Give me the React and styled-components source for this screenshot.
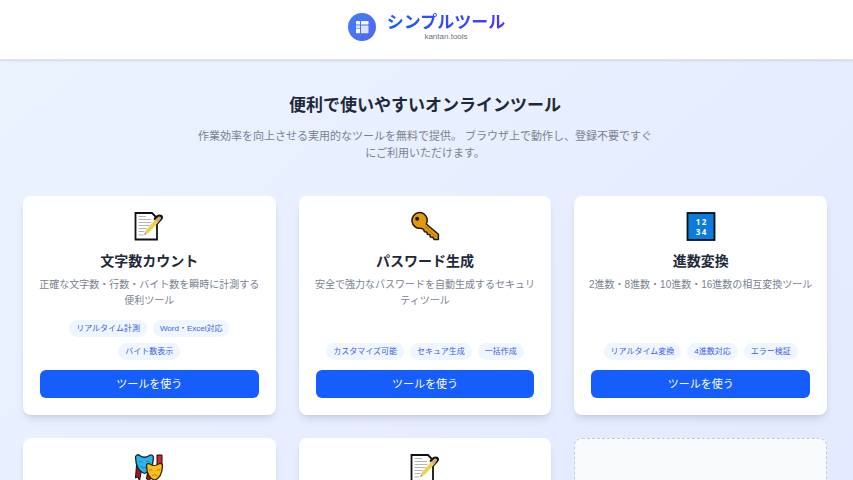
import React from "react";
import styled, { createGlobalStyle } from "styled-components";

const GlobalStyle = createGlobalStyle`
  * {
    box-sizing: border-box;
  }

  body {
    margin: 0;
    color: #1e2939;
    font-family: "Liberation Sans", "Noto Sans CJK JP", sans-serif;
  }

  h1, h2, h3, p, ul {
    margin: 0;
    padding: 0;
  }
`;

const MemoIcon = () => (
  <svg viewBox="0 0 30 30" aria-hidden="true">
    <path d="M1.500 2h16.500l5 5v21.500h-21.500z" fill="#fff" stroke="#111" strokeWidth="1.800" />
    <path
      d="M4.500 5.500h7.500M4.500 8.500h12.500M4.500 11.500h13M4.500 14.500h11M4.500 17.500h8M4.500 20.500h6M4.500 24h5"
      stroke="#b4b4b4"
      strokeWidth="1"
    />
    <path d="M20 8.500c1.500-3 4-4.300 6-4.300 2.600 0 3 2.600 1.500 4.100l-4 4.500" fill="#111" stroke="#111" strokeWidth="1.300" />
    <path d="M10.500 23.500l1.500-4.500L22.500 7.500l3 2.500L15 21.500z" fill="#f3cd4e" />
    <path d="M21.200 8.900l3.100-3.200c1.500-1 3.600.6 2.500 2.400l-2.900 3.300z" fill="#dba879" />
    <path d="M10 24.200l1.200-2.600 1.400 1.300z" fill="#998a6d" />
  </svg>
);

const KeyIcon = () => (
  <svg viewBox="0 0 30 30" aria-hidden="true">
    <path
      d="M9 1.500a7.900 7.900 0 1 0 1.700 15.800l2.900 1.100.9 2.400 2.300.2.500 2.200 2.400.2.600 2.500 2.400.3 1.400 2.200h4.300v-5.200L16.300 13A7.900 7.900 0 0 0 9 1.500z"
      fill="#e09a0b"
      stroke="#21180c"
      strokeWidth="1.500"
      strokeLinejoin="round"
    />
    <path d="M15 15.300l11 10.700" stroke="#a96f0c" strokeWidth="1" />
    <circle cx="7.200" cy="7.700" r="2" fill="#21180c" />
  </svg>
);

const NumbersIcon = () => (
  <svg viewBox="0 0 30 30" aria-hidden="true">
    <rect x="1.500" y="2" width="27" height="27" fill="#0c7bdc" stroke="#0b0f16" strokeWidth="1.800" />
    <g fill="#fff" fontFamily="Open Sans, sans-serif" fontSize="8" fontWeight="700" textAnchor="middle">
      <text x="12" y="14">1</text>
      <text x="18" y="14">2</text>
      <text x="12" y="24">3</text>
      <text x="18" y="24">4</text>
    </g>
  </svg>
);

const MasksIcon = () => (
  <svg viewBox="0 0 30 30" aria-hidden="true">
    <path d="M2.500 12l-1 13 2.500-1 1.500 4 2-11z" fill="#a31526" stroke="#111" />
    <path d="M23 2h5v10l-2 3.500-3-3z" fill="#d32734" stroke="#111" />
    <path d="M14 15l-1.500 11 3 2 3-9z" fill="#a31526" stroke="#111" />
    <path
      d="M1.500 4.500c0-2.500 2.500-3.500 4.200-2 2.800 2 6.800 2 9.600 0 2-1.500 4.200 0 4.200 2.500-.5 7.500-2.800 13.500-9 15.500C4.300 18.500 1.800 12 1.500 4.500z"
      fill="#2db4ea"
      stroke="#152333"
      strokeWidth="1.300"
    />
    <path d="M4.500 9q2-1.500 4 0M12 9q2-1.500 4 0M6.500 13.500q4 3 7.500 0" fill="none" stroke="#1b7fb0" strokeWidth=".8" />
    <path
      d="M12.500 12.500c.2-2 2.500-2.500 4-1.200 2.200 1.600 5.800 1.400 8-.3 2-1.500 4-.3 4 1.800-.3 6.700-2.200 12.500-7.800 14.400-5.600-1.600-8-8-8.200-14.700z"
      fill="#fbbf1b"
      stroke="#30220d"
      strokeWidth="1.300"
    />
    <path d="M15 17.500q2-1.800 3.500 0M22.500 17.500q2-1.800 3.500 0M18 23q3-3 5.500 0" fill="none" stroke="#a8740c" strokeWidth=".8" />
  </svg>
);

const tools = [
  {
    icon: <MemoIcon />,
    title: "文字数カウント",
    text: "正確な文字数・行数・バイト数を瞬時に計測する便利ツール",
    tags: ["リアルタイム計測", "Word・Excel対応", "バイト数表示"],
  },
  {
    icon: <KeyIcon />,
    title: "パスワード生成",
    text: "安全で強力なパスワードを自動生成するセキュリティツール",
    tags: ["カスタマイズ可能", "セキュア生成", "一括作成"],
  },
  {
    icon: <NumbersIcon />,
    title: "進数変換",
    text: "2進数・8進数・10進数・16進数の相互変換ツール",
    tags: ["リアルタイム変換", "4進数対応", "エラー検証"],
  },
  { icon: <MasksIcon /> },
  { icon: <MemoIcon /> },
];

const ToolCard = ({ icon, title, text, tags }) => (
  <Card>
    <CardIcon>{icon}</CardIcon>
    {title && (
      <>
        <CardTitle>{title}</CardTitle>
        <CardText>{text}</CardText>
        <Tags>
          {tags.map((tag) => (
            <Tag key={tag}>{tag}</Tag>
          ))}
        </Tags>
        <ToolLink href="#">ツールを使う</ToolLink>
      </>
    )}
  </Card>
);

const App = () => {
  return (
    <Page>
      <GlobalStyle />
      <Header>
        <Logo viewBox="0 0 28 28" aria-hidden="true">
          <defs>
            <linearGradient id="logo-fill" x1="0" y1="0" x2="1" y2="1">
              <stop offset="0" stopColor="#3b82f6" />
              <stop offset="1" stopColor="#5563f0" />
            </linearGradient>
          </defs>
          <circle cx="14" cy="14" r="14" fill="url(#logo-fill)" />
          <g fill="#fff">
            <rect x="8" y="8" width="4" height="3.500" rx=".5" opacity=".95" />
            <rect x="13" y="8" width="7.500" height="3.500" rx=".5" opacity=".95" />
            <rect x="8" y="12.400" width="4" height="2.600" opacity=".8" />
            <rect x="13" y="12.400" width="7.500" height="7.900" rx=".5" opacity=".8" />
            <rect x="8" y="15.600" width="4" height="4.700" rx=".5" opacity=".95" />
          </g>
        </Logo>
        <Brand>
          <BrandName>シンプルツール</BrandName>
          <Domain>kantan.tools</Domain>
        </Brand>
      </Header>
      <Main>
        <Hero>
          <HeroTitle>便利で使いやすいオンラインツール</HeroTitle>
          <HeroText>
            作業効率を向上させる実用的なツールを無料で提供。 ブラウザ上で動作し、登録不要ですぐにご利用いただけます。
          </HeroText>
        </Hero>
        <Grid>
          {tools.map((tool, i) => (
            <ToolCard key={i} {...tool} />
          ))}
          <EmptyCard />
        </Grid>
      </Main>
    </Page>
  );
};

const Page = styled.div`
  min-height: 100vh;
  background: linear-gradient(to bottom right, #ecf3ff, #e2e8ff);
`;

const Header = styled.header`
  display: flex;
  justify-content: center;
  align-items: flex-start;
  gap: 11px;
  padding: 13px 23px 17px;
  background: #fff;
  border-bottom: 1px solid #dfe4ec;
  box-shadow: 0 1px 2px rgba(0, 0, 0, 0.1);
`;

const Logo = styled.svg`
  width: 28px;
  height: 28px;
`;

const Brand = styled.div`
  text-align: center;
`;

const BrandName = styled.h1`
  font-size: 17px;
  line-height: 19px;
  font-weight: 700;
  color: transparent;
  background: linear-gradient(to right, #155dfc, #4f39f6);
  background-clip: text;
`;

const Domain = styled.p`
  font-size: 8px;
  line-height: 10px;
  color: #6a7282;
`;

const Main = styled.main`
  padding: 36px 26px 90px 23px;
`;

const Hero = styled.section`
  margin-bottom: 34px;
  text-align: center;
`;

const HeroTitle = styled.h2`
  margin-bottom: 12px;
  font-size: 17px;
  line-height: 20px;
  font-weight: 700;
`;

const HeroText = styled.p`
  max-width: 462px;
  margin: 0 auto;
  font-size: 11px;
  line-height: 17px;
  color: #7a8291;
`;

const Grid = styled.div`
  display: grid;
  grid-template-columns: repeat(3, 1fr);
  grid-auto-rows: 1fr;
  gap: 23px;
`;

const Card = styled.article`
  display: flex;
  flex-direction: column;
  align-items: center;
  padding: 15px 14px 17px;
  border-radius: 8px;
  background: #fff;
  box-shadow: 0 6px 10px -2px rgba(0, 0, 0, 0.1), 0 2px 4px -2px rgba(0, 0, 0, 0.1);
  text-align: center;
`;

const EmptyCard = styled.div`
  border: 1px dashed #c5cbd5;
  border-radius: 8px;
  background: #f9fafb;
`;

const CardIcon = styled.div`
  width: 30px;
  height: 30px;
  margin-bottom: 10px;

  svg {
    display: block;
    width: 100%;
    height: 100%;
  }
`;

const CardTitle = styled.h3`
  margin-bottom: 6px;
  font-size: 14px;
  line-height: 20px;
  font-weight: 700;
`;

const CardText = styled.p`
  margin-bottom: 11px;
  font-size: 10px;
  line-height: 16px;
  color: #7a8291;
`;

const Tags = styled.ul`
  display: flex;
  flex-wrap: wrap;
  justify-content: center;
  gap: 6px;
  margin-top: auto;
  margin-bottom: 10px;
  list-style: none;
`;

const Tag = styled.li`
  padding: 0 7px;
  border-radius: 9px;
  background: #eff6ff;
  color: #3a62e8;
  font-size: 8px;
  line-height: 17px;
`;

const ToolLink = styled.a`
  align-self: stretch;
  margin: 0 3px;
  border-radius: 6px;
  background: #155dfc;
  color: #fff;
  font-size: 11px;
  line-height: 28px;
  text-decoration: none;

  &:hover {
    background: #1447e6;
  }
`;

export default App;
